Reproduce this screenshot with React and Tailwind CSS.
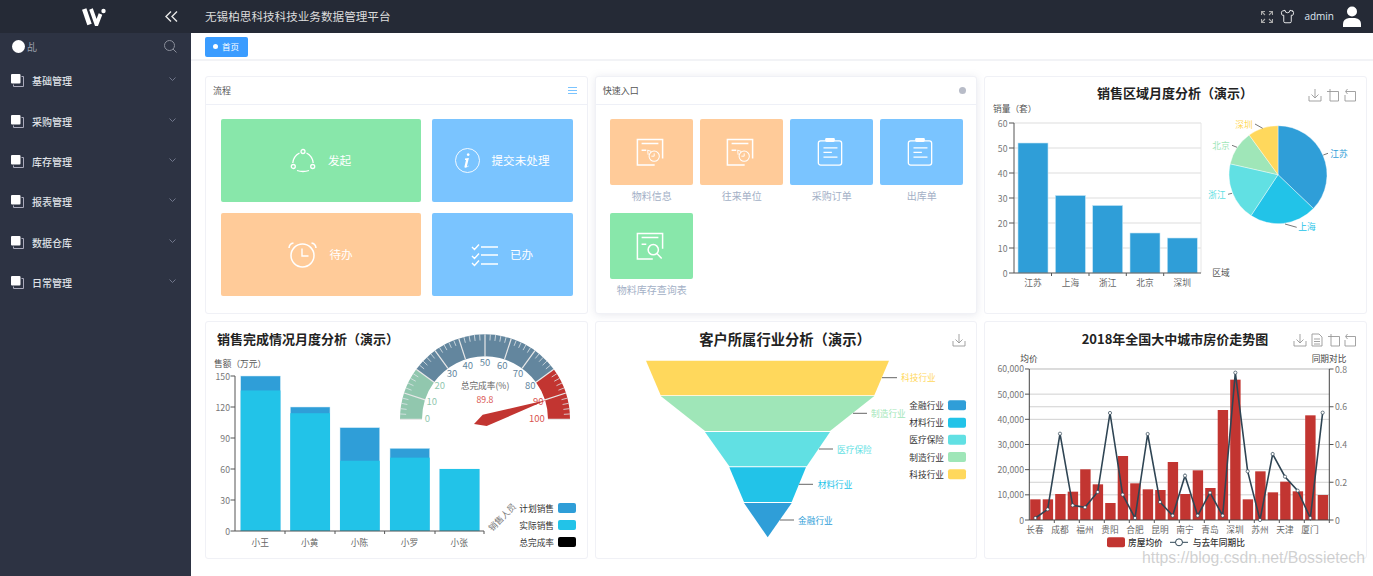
import React from "react";
import { Shirt } from "lucide-react";

const C = { blue: "#2f9ed8", sky: "#22c3e8", aqua: "#61e0e3", mint: "#9fe6b8", yellow: "#ffd85c", red: "#c23531" };

function T({ x, y, children, size = 8.7, fill = "#666", anchor = "middle", weight, transform }) {
  return (
    <text x={x} y={y} fontSize={size} fill={fill} textAnchor={anchor} dominantBaseline="central" fontWeight={weight} transform={transform}>
      {children}
    </text>
  );
}

function Line({ x1, y1, x2, y2, c = "#ccc", w = 1 }) {
  return <line x1={x1} y1={y1} x2={x2} y2={y2} stroke={c} strokeWidth={w} />;
}

function Save({ x, y }) {
  return (
    <g transform={`translate(${x - 6},${y - 6})`} fill="none" stroke="#999" strokeWidth="0.9">
      <path d="M0 7v5h12V7M6 0v9M2.5 5.5 6 9l3.5-3.5" />
    </g>
  );
}
function Zoom1({ x, y }) {
  return (
    <g transform={`translate(${x - 6},${y - 6})`} fill="none" stroke="#999" strokeWidth="0.9">
      <path d="M0 2.500h11.500V12H3V0" />
    </g>
  );
}
function Zoom2({ x, y }) {
  return (
    <g transform={`translate(${x - 6},${y - 6})`} fill="none" stroke="#999" strokeWidth="0.9">
      <path d="M2 2.500h9.500V12H1V6M3.500 0 1.500 2.500 3.500 5" />
    </g>
  );
}
function DataView({ x, y }) {
  return (
    <g transform={`translate(${x - 5},${y - 6})`} fill="none" stroke="#999" strokeWidth="0.9">
      <path d="M0 0h7l3 3v9H0zM2 5h6M2 7.5h6M2 10h6" />
    </g>
  );
}

function pieSlice(cx, cy, r, a0, a1) {
  const p = (a) => [cx + r * Math.sin((a * Math.PI) / 180), cy - r * Math.cos((a * Math.PI) / 180)];
  const [x0, y0] = p(a0);
  const [x1, y1] = p(a1);
  return `M${cx} ${cy}L${x0} ${y0}A${r} ${r} 0 ${a1 - a0 > 180 ? 1 : 0} 1 ${x1} ${y1}Z`;
}

function RegionChart() {
  const bars = [
    ["江苏", 52, 1018],
    ["上海", 31, 1055.4],
    ["浙江", 27, 1092.7],
    ["北京", 16, 1130],
    ["深圳", 14, 1167.3],
  ];
  const slices = [
    [0, 133.7, C.blue],
    [133.7, 213.4, C.sky],
    [213.4, 282.8, C.aqua],
    [282.8, 324, C.mint],
    [324, 360, C.yellow],
  ];
  const labels = [
    ["江苏", 1339, 153, C.blue, 1323.3, 155, 1328, 153.3],
    ["上海", 1307, 226, C.sky, 1285, 224, 1296.7, 227.3],
    ["浙江", 1217, 194, C.aqua, 1228, 194.3, 1232, 193.3],
    ["北京", 1221, 145, C.mint, 1232, 145.3, 1237, 147.3],
    ["深圳", 1244, 124, C.yellow, 1255, 124, 1262.7, 128.3],
  ];
  return (
    <svg viewBox="985 77 380 236" width="380" height="236" className="block">
      <T x={1175} y={92.5} size={13} fill="#222" weight="700">销售区域月度分析（演示）</T>
      <Save x={1315} y={95} />
      <Zoom1 x={1333} y={95} />
      <Zoom2 x={1350} y={95} />
      <T x={993} y={108} anchor="start" fill="#555">销量（套）</T>
      {[0, 10, 20, 30, 40, 50, 60].map((v) => {
        const y = 273 - v * 2.5;
        return (
          <g key={v}>
            {v > 0 && <Line x1={1014} y1={y} x2={1201} y2={y} c="#ddd" />}
            <Line x1={1009} y1={y} x2={1014} y2={y} c="#555" />
            <T x={1007.5} y={y} anchor="end" fill="#777">{v}</T>
          </g>
        );
      })}
      <Line x1={1201} y1={123} x2={1201} y2={273} c="#e6e6e6" />
      {bars.map(([n, v, x]) => (
        <g key={n}>
          <rect x={x} y={273 - v * 2.5} width={30} height={v * 2.5} fill={C.blue} stroke="#c4e4f5" strokeWidth="0.6" />
          <T x={x + 15} y={282} fill="#666">{n}</T>
        </g>
      ))}
      <Line x1={1014} y1={123} x2={1014} y2={273} c="#555" />
      <Line x1={1014} y1={273} x2={1201} y2={273} c="#555" />
      {[1051.5, 1089, 1126.3, 1163.7].map((x) => <Line key={x} x1={x} y1={273} x2={x} y2={276} c="#555" />)}
      <T x={1221} y={272} fill="#555">区域</T>
      {slices.map(([a, b, c]) => <path key={a} d={pieSlice(1278, 174.7, 49, a, b)} fill={c} stroke="#fff" strokeWidth="0.4" />)}
      {labels.map(([n, x, y, c, x1, y1, x2, y2]) => (
        <g key={n}>
          <Line x1={x1} y1={y1} x2={x2} y2={y2} c="#555" w={0.8} />
          <T x={x} y={y} fill={c}>{n}</T>
        </g>
      ))}
    </svg>
  );
}

function SalesChart() {
  const rows = [
    ["小王", 150, 136, 240.7],
    ["小黄", 120, 114, 290.3],
    ["小陈", 100, 68, 340],
    ["小罗", 80, 71, 390],
    ["小张", 60, 60, 439.7],
  ];
  const k = 155 / 150;
  const cx = 485;
  const cy = 419.3;
  const polar = (v, r) => {
    const a = Math.PI - (v / 100) * Math.PI;
    return [cx + r * Math.cos(a), cy - r * Math.sin(a)];
  };
  const band = (a, b, c) => {
    const [x0, y0] = polar(a, 85);
    const [x1, y1] = polar(b, 85);
    const [x2, y2] = polar(b, 63);
    const [x3, y3] = polar(a, 63);
    return <path d={`M${x0} ${y0}A85 85 0 0 1 ${x1} ${y1}L${x2} ${y2}A63 63 0 0 0 ${x3} ${y3}Z`} fill={c} />;
  };
  const colorOf = (v) => (v <= 20 ? "#91c7ae" : v <= 80 ? "#63869e" : "#d9534f");
  const big = [0, 10, 20, 30, 40, 50, 60, 70, 80, 90, 100];
  const small = [];
  for (let i = 0; i <= 100; i += 2) if (i % 10) small.push(i);
  return (
    <svg viewBox="206 322 380 236" width="380" height="236" className="block">
      <T x={217} y={338.5} anchor="start" size={13} fill="#222" weight="700">销售完成情况月度分析（演示）</T>
      <T x={214} y={363} anchor="start" fill="#555">售额（万元）</T>
      {[0, 30, 60, 90, 120, 150].map((v) => {
        const y = 531 - v * k;
        return (
          <g key={v}>
            <Line x1={230.5} y1={y} x2={235} y2={y} c="#555" />
            <T x={230} y={y} anchor="end" fill="#777">{v}</T>
          </g>
        );
      })}
      {rows.map(([n, a, b, x]) => (
        <g key={n}>
          <rect x={x} y={531 - a * k} width={39.7} height={a * k} fill={C.blue} stroke="#cdeaf8" strokeWidth="0.5" />
          <rect x={x} y={531 - b * k} width={39.7} height={b * k} fill={C.sky} />
          <T x={x + 19.5} y={542} fill="#666">{n}</T>
        </g>
      ))}
      <Line x1={235} y1={376} x2={235} y2={531} c="#555" />
      <Line x1={235} y1={531} x2={484} y2={531} c="#555" />
      {[285, 335, 384.6, 435, 484].map((x) => <Line key={x} x1={x} y1={531} x2={x} y2={534} c="#555" />)}
      <T x={502} y={517} fill="#777" transform="rotate(-45 502 517)">销售人员</T>
      {[["计划销售", C.blue, 508], ["实际销售", C.sky, 525], ["总完成率", "#000", 542]].map(([n, c, y]) => (
        <g key={n}>
          <T x={554} y={y} anchor="end" fill="#333">{n}</T>
          <rect x={558} y={y - 5} width={18} height={10} rx={2} fill={c} />
        </g>
      ))}
      {band(0, 20, "#91c7ae")}
      {band(20, 80, "#63869e")}
      {band(80, 100, C.red)}
      {big.map((v) => {
        const [x0, y0] = polar(v, 85);
        const [x1, y1] = polar(v, 63);
        const [lx, ly] = polar(v, 56);
        return (
          <g key={v}>
            <Line x1={x0} y1={y0} x2={x1} y2={y1} c="#e8e8e8" w={1.2} />
            <T x={v === 100 ? lx - 4 : v === 0 ? lx - 1.5 : lx} y={ly - 1} size={9.5} fill={colorOf(v)}>{v}</T>
          </g>
        );
      })}
      {small.map((v) => {
        const [x0, y0] = polar(v, 85);
        const [x1, y1] = polar(v, 79);
        return <Line key={v} x1={x0} y1={y0} x2={x1} y2={y1} c="#dfe6ea" w={0.8} />;
      })}
      <T x={485} y={385.7} fill="#666">总完成率(%)</T>
      <T x={485} y={399} fill="#d9534f">89.8</T>
      <polygon points="474,424 486.7,426 546.7,400 482.7,414.7" fill={C.red} />
    </svg>
  );
}

function FunnelChart() {
  const layers = [
    ["646,360.7 889,360.7 874.3,395.3 660.7,395.3", C.yellow],
    ["660.7,396 874.3,396 830,431 705,431", C.mint],
    ["705,432 830,432 806.7,466.3 729.3,466.3", C.aqua],
    ["729.3,467.3 806,467.3 791.7,502 744,502", C.sky],
    ["744,503 791.7,503 767.7,537.3", C.blue],
  ];
  const labels = [
    ["科技行业", 882, 897, 377.7, 901, C.yellow],
    ["制造行业", 853, 867, 413.3, 871, C.mint],
    ["医疗保险", 819, 833, 449, 837, C.aqua],
    ["材料行业", 799, 813, 484.3, 817.7, C.sky],
    ["金融行业", 780, 794, 520, 798, C.blue],
  ];
  const legend = [
    ["金融行业", C.blue, 405.3],
    ["材料行业", C.sky, 422.7],
    ["医疗保险", C.aqua, 439.7],
    ["制造行业", C.mint, 457],
    ["科技行业", C.yellow, 474.3],
  ];
  return (
    <svg viewBox="596 322 380 236" width="380" height="236" className="block">
      <T x={785} y={338.5} size={14.3} fill="#222" weight="700">客户所属行业分析（演示）</T>
      <Save x={959} y={340} />
      {layers.map(([p, c]) => <polygon key={c} points={p} fill={c} />)}
      {labels.map(([n, x1, x2, y, tx, c]) => (
        <g key={n}>
          <Line x1={x1} y1={y} x2={x2} y2={y} c="#666" />
          <T x={tx} y={y} anchor="start" fill={c}>{n}</T>
        </g>
      ))}
      {legend.map(([n, c, y]) => (
        <g key={n}>
          <T x={944} y={y} anchor="end" fill="#333">{n}</T>
          <rect x={948} y={y - 5} width={18} height={10} rx={2} fill={c} />
        </g>
      ))}
    </svg>
  );
}

function HouseChart() {
  const tops = [538, 538, 522, 515, 448, 493, 549, 408, 490, 508, 510, 426, 522, 451, 504, 270, 179, 538, 454, 517, 485, 514, 286, 525];
  const pts = [
    [166, 594], [203, 568], [240, 341], [278, 556], [315, 562], [353, 516], [390, 279], [428, 524],
    [465, 594], [503, 342], [540, 546], [578, 587], [615, 467], [653, 587], [690, 518], [728, 587],
    [766, 158], [803, 454], [840, 600], [878, 402], [915, 470], [953, 512], [991, 594], [1028, 278],
  ].map(([x, y]) => [980 + x / 3, 320 + y / 3]);
  const cities = ["长春", "成都", "福州", "贵阳", "合肥", "昆明", "南宁", "青岛", "深圳", "苏州", "天津", "厦门"];
  return (
    <svg viewBox="985 322 380 236" width="380" height="236" className="block">
      <T x={1175} y={338.5} size={13} fill="#222" weight="700">2018年全国大中城市房价走势图</T>
      <Save x={1300} y={340} />
      <DataView x={1317} y={340} />
      <Zoom1 x={1334} y={340} />
      <Zoom2 x={1350} y={340} />
      <T x={1029} y={358} fill="#444">均价</T>
      <T x={1329} y={358} fill="#444">同期对比</T>
      {["0", "10,000", "20,000", "30,000", "40,000", "50,000", "60,000"].map((v, i) => {
        const y = 520 - i * 25.17;
        return (
          <g key={v}>
            {i > 0 && <Line x1={1029.3} y1={y} x2={1329.3} y2={y} c="#d0d0d0" />}
            <Line x1={1025} y1={y} x2={1029.3} y2={y} c="#555" />
            <T x={1024} y={y} anchor="end" fill="#777">{v}</T>
          </g>
        );
      })}
      {["0", "0.2", "0.4", "0.6", "0.8"].map((v, i) => {
        const y = 520 - i * 37.75;
        return (
          <g key={v}>
            {i > 0 && <Line x1={1029.3} y1={y} x2={1329.3} y2={y} c="#d0d0d0" />}
            <Line x1={1329.3} y1={y} x2={1333.5} y2={y} c="#555" />
            <T x={1335} y={y} anchor="start" fill="#777">{v}</T>
          </g>
        );
      })}
      {tops.map((t, i) => {
        const y = 320 + t / 3;
        return <rect key={i} x={1030.2 + i * 12.5} y={y} width={10.4} height={520 - y} fill={C.red} />;
      })}
      <Line x1={1029.3} y1={369} x2={1029.3} y2={520} c="#444" />
      <Line x1={1329.3} y1={369} x2={1329.3} y2={520} c="#444" />
      <Line x1={1029.3} y1={520} x2={1329.3} y2={520} c="#444" />
      {cities.map((c, i) => (
        <g key={c}>
          <Line x1={1029.3 + (i + 1) * 25} y1={520} x2={1029.3 + (i + 1) * 25} y2={523} c="#555" />
          <T x={1035 + i * 25} y={529.3} fill="#666">{c}</T>
        </g>
      ))}
      <polyline points={pts.map((p) => p.join(",")).join(" ")} fill="none" stroke="#2f4554" strokeWidth="1.6" />
      {pts.map(([x, y], i) => <circle key={i} cx={x} cy={y} r={1.6} fill="#fff" stroke="#2f4554" strokeWidth="0.7" />)}
      <rect x={1107} y={537.3} width={18} height={10} rx={2} fill={C.red} />
      <T x={1128} y={542.3} anchor="start" fill="#333" weight="500">房屋均价</T>
      <Line x1={1170} y1={542.3} x2={1188} y2={542.3} c="#2f4554" />
      <circle cx={1179} cy={542.3} r={3.5} fill="#fff" stroke="#2f4554" />
      <T x={1192.7} y={542.3} anchor="start" fill="#333" weight="500">与去年同期比</T>
    </svg>
  );
}

const ShareIcon = () => (
  <svg width="26" height="25" viewBox="0 0 26 25" fill="none" stroke="#fff" strokeWidth="1.3">
    <circle cx="13" cy="3.5" r="2" />
    <circle cx="3.3" cy="18.5" r="2" />
    <circle cx="22.7" cy="18.5" r="2" />
    <path d="M9.5 5Q3.5 8 2.8 15M16.5 5q6 3 6.7 10M7 22.5q6 2 12 0" />
  </svg>
);
const InfoIcon = () => (
  <svg width="25" height="25" viewBox="0 0 25 25" fill="none">
    <circle cx="12.5" cy="12.5" r="12" stroke="#fff" strokeWidth="0.9" />
    <path d="M13.2 5.2a1.4 1.4 0 1 0 .01 0zM10 10.6l3.9-.6-2 8.2q-.1.8 1.8-.6l.2.4q-2.6 2.2-4 1.7-.8-.4-.3-1.7l1.4-6-1-.1z" fill="#fff" />
  </svg>
);
const AlarmIcon = () => (
  <svg width="29" height="26" viewBox="0 0 29 26" fill="none" stroke="#fff">
    <circle cx="14.5" cy="13.5" r="11.5" strokeWidth="1.5" />
    <path d="M14 6.5v7.5h6.5" strokeWidth="1.4" />
    <path d="M1 6Q1.5 1.5 5.5 1M28 6q-.5-4.5-4.5-5" strokeWidth="1.6" />
  </svg>
);
const ListIcon = () => (
  <svg width="27" height="24" viewBox="0 0 27 24" fill="none" stroke="#fff" strokeWidth="1.4">
    <path d="M1 4l2.5 2.5L8 1.5M1 13l2.5 2.5L8 10.5M1 20l2.5 2.5L8 17.5M10 4h17M10 12h17M10 21h17" />
  </svg>
);
const DocIcon = ({ kind }) => (
  <svg width="28" height="28" viewBox="0 0 30 30" fill="none" stroke="#fff" strokeWidth="1.6" className="mr-[4px]">
    <path d={kind === "clock" ? "M20 29H1.500V1.500H28.500V22" : "M18 29H1.500V1.500H28.500V18"} />
    <path d="M6 6h18M6 13h5" />
    {kind === "clock" ? (
      <>
        <circle cx="19.500" cy="19.500" r="5.500" strokeWidth="1.100" />
        <path d="M19.500 16.500v3h-3" strokeWidth="1" />
        <path d="M13 18l-.5-5 4 1.500" strokeWidth="1" />
      </>
    ) : (
      <>
        <circle cx="18.500" cy="19" r="5.500" />
        <path d="M22.500 23l5 5.500" />
      </>
    )}
  </svg>
);
const ClipIcon = () => (
  <svg width="26" height="28" viewBox="0 0 27 30" fill="none" stroke="#fff" strokeWidth="1.4" className="mr-[3px]">
    <rect x="1" y="3" width="25" height="26" rx="2.5" />
    <rect x="9" y="0.500" width="9" height="3" rx="1" fill="#fff" />
    <path d="M6.500 10.500h15M6.500 15.500h9M6.500 20.500h15" />
  </svg>
);

function Card({ title, action, children, className = "" }) {
  return (
    <div className={`rounded-[3px] border border-[#f0f1f6] bg-white overflow-hidden ${className}`}>
      {title && (
        <div className="flex h-[28px] items-center justify-between border-b border-[#eef0f7] pl-[7px] pr-[10px] text-[9px] text-[#555]">
          <span>{title}</span>
          {action}
        </div>
      )}
      {children}
    </div>
  );
}

function FlowTile({ icon, label, color }) {
  return (
    <div className={`flex items-center justify-center gap-[12px] rounded-[2px] text-[11.600px] text-white ${color}`}>
      {icon}
      <span>{label}</span>
    </div>
  );
}

function QuickTile({ icon, label, color }) {
  return (
    <div className="flex flex-col items-center">
      <div className={`flex h-[66px] w-[83px] items-center justify-center rounded-[2px] ${color}`}>{icon}</div>
      <div className="mt-[4px] whitespace-nowrap text-[10px] leading-[14px] text-[#a3b0c6]">{label}</div>
    </div>
  );
}

const menu = ["基础管理", "采购管理", "库存管理", "报表管理", "数据仓库", "日常管理"];

export default function App() {
  return (
    <div className="relative flex h-[576px] w-[1373px] flex-col overflow-hidden bg-white font-['Noto_Sans_CJK_SC','Liberation_Sans',sans-serif]">
      <header className="flex h-[33px] shrink-0 items-center bg-[#252a36]">
        <div className="relative flex w-[191px] shrink-0 items-center justify-center">
          <svg width="24" height="18" viewBox="0 0 24 18" className="mr-[4px]">
            <path d="M2.200 1 7.500 16.500" fill="none" stroke="#fff" strokeWidth="4.600" />
            <path d="M9 1 14.500 16.500 18.500 6" fill="none" stroke="#fff" strokeWidth="3.800" />
            <circle cx="21.500" cy="3" r="2.200" fill="#fff" />
          </svg>
          <svg width="13" height="11" viewBox="0 0 13 11" fill="none" stroke="#e8e8e8" strokeWidth="1.400" className="absolute left-[165px] top-[3px]">
            <path d="M6 .5 1 5.500l5 5M12 .5 7 5.500l5 5" />
          </svg>
        </div>
        <div className="ml-[14px] text-[11.600px] text-[#dcdcdc]">无锡柏思科技科技业务数据管理平台</div>
        <div className="ml-auto flex items-center pr-[12px]">
          <svg width="12" height="12" viewBox="0 0 12 12" fill="none" stroke="#aaa" strokeWidth="1.100">
            <path d="M.5 4V.5H4M.5.5 4 4M8 .5h3.500V4M11.500.5 8 4M.5 8v3.500H4M.5 11.500 4 8M8 11.500h3.500V8M11.500 11.500 8 8" />
          </svg>
          <Shirt size={15} strokeWidth={1.4} className="ml-[7px] text-white" />
          <span className="ml-[9px] font-['Open_Sans',sans-serif] text-[10px] text-[#dfe6f0]">admin</span>
          <svg width="18" height="21" viewBox="0 0 18 21" fill="#fff" className="ml-[9px]">
            <circle cx="9" cy="5.500" r="5" />
            <path d="M0 21v-3q0-5 6-6h6q6 1 6 6v3z" />
          </svg>
        </div>
      </header>
      <div className="flex min-h-0 flex-1">
        <aside className="w-[191px] shrink-0 bg-[#2d3343]">
          <div className="flex h-[27.500px] items-center pl-[12px] pr-[14px]">
            <span className="h-[13px] w-[13px] rounded-full bg-white" />
            <span className="ml-[2px] text-[10px] text-[#9aa0ad]">乩</span>
            <svg width="13" height="13" viewBox="0 0 13 13" fill="none" stroke="#8b8f9b" className="ml-auto">
              <circle cx="5.500" cy="5.500" r="5" />
              <path d="m9 9 3.500 3.500" />
            </svg>
          </div>
          {menu.map((m) => (
            <div key={m} className="flex h-[40.400px] items-center pl-[11px] pr-[15px]">
              <svg width="13" height="13" viewBox="0 0 13 13" fill="none">
                <path d="M10.500 2.500h2v10h-10v-2" stroke="#aab" strokeWidth="1" />
                <rect x="0" y="0" width="9.500" height="9.500" rx="1" fill="#fff" />
              </svg>
              <span className="ml-[8px] text-[10px] font-medium text-[#dfe1e6]">{m}</span>
              <svg width="7" height="4" viewBox="0 0 7 4" fill="none" stroke="#70768a" className="mb-[3px] ml-auto">
                <path d="m.5.500 3 3 3-3" />
              </svg>
            </div>
          ))}
        </aside>
        <main className="min-w-0 flex-1">
          <div className="flex h-[28px] items-center border-b-2 border-[#f2f3f6] pl-[14px]">
            <div className="mt-[1px] flex h-[20px] w-[43px] items-center rounded-[2px] bg-[#3a9cff] pl-[8px] text-[8.500px] text-white">
              <span className="mr-[4px] h-[5px] w-[5px] rounded-full bg-white" />
              首页
            </div>
          </div>
          <div className="grid grid-cols-3 grid-rows-[238px_238px] gap-[7px] pl-[14px] pr-[6px] pt-[15px]">
            <Card
              title="流程"
              action={
                <svg width="9" height="7" viewBox="0 0 9 7" stroke="#7ac4ff">
                  <path d="M0 .5h9M0 3.500h9M0 6.500h9" />
                </svg>
              }
            >
              <div className="grid grid-cols-[200px_141px] grid-rows-[83px_83px] gap-[11px] pl-[14.500px] pt-[14px]">
                <FlowTile color="bg-[#88e7aa]" icon={<ShareIcon />} label="发起" />
                <FlowTile color="bg-[#7ac4ff]" icon={<InfoIcon />} label="提交未处理" />
                <FlowTile color="bg-[#ffcb99]" icon={<AlarmIcon />} label="待办" />
                <FlowTile color="bg-[#7ac4ff]" icon={<ListIcon />} label="已办" />
              </div>
            </Card>
            <Card
              title="快速入口"
              className="shadow-[0_1px_8px_rgba(120,130,160,0.18)]"
              action={<span className="h-[7px] w-[7px] rounded-full bg-[#b8bcc8]" />}
            >
              <div className="grid grid-cols-[83px_83px_83px_83px] gap-x-[7px] gap-y-[10px] pl-[14.500px] pt-[14px]">
                <QuickTile color="bg-[#ffcb99]" icon={<DocIcon kind="clock" />} label="物料信息" />
                <QuickTile color="bg-[#ffcb99]" icon={<DocIcon kind="clock" />} label="往来单位" />
                <QuickTile color="bg-[#7ac4ff]" icon={<ClipIcon />} label="采购订单" />
                <QuickTile color="bg-[#7ac4ff]" icon={<ClipIcon />} label="出库单" />
                <QuickTile color="bg-[#88e7aa]" icon={<DocIcon kind="search" />} label="物料库存查询表" />
              </div>
            </Card>
            <Card>
              <RegionChart />
            </Card>
            <Card>
              <SalesChart />
            </Card>
            <Card>
              <FunnelChart />
            </Card>
            <Card>
              <HouseChart />
            </Card>
          </div>
        </main>
      </div>
      <div className="pointer-events-none absolute left-[1142px] top-[547px] whitespace-nowrap font-['Liberation_Sans',sans-serif] text-[15.800px] leading-[21px] text-[rgba(170,170,170,0.55)]">
        https://blog.csdn.net/Bossietech
      </div>
    </div>
  );
}
